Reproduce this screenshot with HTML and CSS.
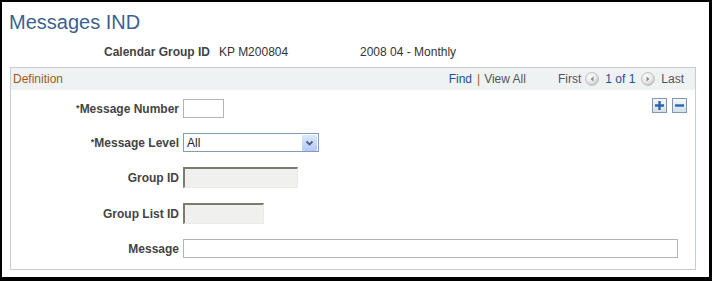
FILE: index.html
```html
<!DOCTYPE html>
<html lang="en">
<head>
  <meta charset="UTF-8" />
  <title>Messages IND</title>
  <link rel="stylesheet" href="styles.css">
</head>
<body>
  <div class="page">
    <h1 class="page-title">Messages IND</h1>

    <div class="key-row">
      <span class="key-label">Calendar Group ID</span>
      <span class="key-value">KP M200804</span>
      <span class="key-desc">2008 04 - Monthly</span>
    </div>

    <div class="group-box">
      <div class="group-header">
        <span class="group-title">Definition</span>
        <div class="nav">
          <a class="link">Find</a><span class="sep">|</span><span class="plain">View All</span>
          <span class="plain first">First</span>
          <svg class="nav-btn" width="14" height="14" viewBox="0 0 14 14">
            <defs>
              <radialGradient id="navg" cx="0.4" cy="0.35" r="0.7">
                <stop offset="0" stop-color="#ffffff"/>
                <stop offset="0.6" stop-color="#e6e6e6"/>
                <stop offset="1" stop-color="#b9b9b9"/>
              </radialGradient>
            </defs>
            <circle cx="7" cy="7" r="6.5" fill="url(#navg)" stroke="#c4c4c4"/>
            <path d="M8.5 4.5 L5.5 7 L8.5 9.5 Z" fill="#8a8a8a"/>
          </svg>
          <span class="link count">1 of 1</span>
          <svg class="nav-btn" width="14" height="14" viewBox="0 0 14 14">
            <circle cx="7" cy="7" r="6.5" fill="url(#navg)" stroke="#c4c4c4"/>
            <path d="M5.5 4.5 L8.5 7 L5.5 9.5 Z" fill="#8a8a8a"/>
          </svg>
          <span class="plain last">Last</span>
        </div>
      </div>

      <div class="group-body">
        <div class="field-row">
          <label class="field-label"><span class="req">*</span>Message Number</label>
          <div class="input w-num"></div>
          <div class="row-tools">
            <svg width="15" height="15" viewBox="0 0 15 15">
              <defs>
                <linearGradient id="btng" x1="0" y1="0" x2="0" y2="1">
                  <stop offset="0" stop-color="#f6f9fc"/>
                  <stop offset="1" stop-color="#d3dee9"/>
                </linearGradient>
              </defs>
              <rect x="0.5" y="0.5" width="14" height="14" fill="url(#btng)" stroke="#7f98b3"/>
              <path d="M7.5 3 V12 M3 7.5 H12" stroke="#2c66ab" stroke-width="2.4"/>
            </svg>
            <svg width="15" height="15" viewBox="0 0 15 15">
              <rect x="0.5" y="0.5" width="14" height="14" fill="url(#btng)" stroke="#7f98b3"/>
              <path d="M3 7.5 H12" stroke="#2c66ab" stroke-width="2.4"/>
            </svg>
          </div>
        </div>

        <div class="field-row">
          <label class="field-label"><span class="req">*</span>Message Level</label>
          <div class="select">
            <span class="select-text">All</span>
            <span class="select-btn">
              <svg width="15" height="16" viewBox="0 0 15 16">
                <defs>
                  <linearGradient id="selg" x1="0" y1="0" x2="0" y2="1">
                    <stop offset="0" stop-color="#dde8fd"/>
                    <stop offset="1" stop-color="#b4c9f6"/>
                  </linearGradient>
                </defs>
                <rect x="0" y="0" width="15" height="16" rx="1.5" fill="url(#selg)"/>
                <path d="M4.5 6.5 L7.5 9.5 L10.5 6.5" fill="none" stroke="#4d5f86" stroke-width="1.8"/>
              </svg>
            </span>
          </div>
        </div>

        <div class="field-row">
          <label class="field-label">Group ID</label>
          <div class="input disabled w-group"></div>
        </div>

        <div class="field-row">
          <label class="field-label">Group List ID</label>
          <div class="input disabled w-list"></div>
        </div>

        <div class="field-row">
          <label class="field-label">Message</label>
          <div class="input w-msg"></div>
        </div>
      </div>
    </div>
  </div>
</body>
</html>
```

FILE: styles.css
```css
* {
  box-sizing: border-box;
  margin: 0;
  padding: 0;
}

html, body {
  height: 281px;
}

body {
  background-color: #000;
  padding: 2px 3px 4px 2px;
  font-family: "Liberation Sans", Arial, sans-serif;
  font-size: 12px;
  color: #333;
}

.page {
  background-color: #fff;
  height: 100%;
  padding: 8px 0 0 0;
}

.page-title {
  font-size: 20px;
  font-weight: normal;
  line-height: 24px;
  color: #3e5f91;
  padding-left: 7px;
}

.key-row {
  display: flex;
  line-height: 14px;
  margin-top: 11px;
  padding-left: 8px;
}

.key-label {
  width: 200px;
  text-align: right;
  font-weight: bold;
  color: #444;
}

.key-value {
  width: 141px;
  margin-left: 9px;
}

.group-box {
  width: 686px;
  margin: 8px 0 0 8px;
  border: 1px solid #c6cdd3;
}

.group-header {
  display: flex;
  align-items: center;
  height: 22px;
  background-color: #eef2f3;
  padding: 0 11px 0 2px;
}

.group-title {
  color: #a9561f;
}

.nav {
  margin-left: auto;
  display: flex;
  align-items: center;
}

.link {
  color: #1e5190;
}

.plain {
  color: #555;
}

.sep {
  color: #a9561f;
  margin: 0 4px 0 5px;
}

.first {
  margin-left: 32px;
}

.nav-btn {
  margin: 0 6px 0 4px;
}

.count + .nav-btn {
  margin-left: 6px;
  margin-right: 6px;
}

.group-body {
  display: flex;
  flex-direction: column;
  gap: 15px;
  padding: 9px 8px 11px 0;
}

.field-row {
  display: flex;
  align-items: center;
}

.field-label {
  width: 168px;
  text-align: right;
  font-weight: bold;
  color: #444;
  margin-right: 4px;
}

.req {
  font-size: 9px;
  vertical-align: 2px;
}

.input {
  height: 19px;
  border: 1px solid #b3b3b3;
  background-color: #fff;
}

.input.disabled {
  height: 21px;
  background-color: #f0f0ee;
  border-top: 2px solid #7b7b70;
  border-left: 2px solid #7b7b70;
  border-right: 1px solid #ebebe6;
  border-bottom: 1px solid #ebebe6;
}

.w-num {
  width: 41px;
}

.w-group {
  width: 115px;
}

.w-list {
  width: 81px;
}

.w-msg {
  width: 495px;
}

.row-tools {
  margin-left: auto;
  align-self: flex-start;
  margin-top: -1px;
  display: flex;
  gap: 5px;
}

.row-tools svg {
  display: block;
}

.select {
  display: flex;
  align-items: center;
  width: 136px;
  height: 19px;
  border: 1px solid #7f9db9;
  padding: 0 1px 0 3px;
}

.select-text {
  flex: 1;
  color: #222;
}

.select-btn svg {
  display: block;
}
```
